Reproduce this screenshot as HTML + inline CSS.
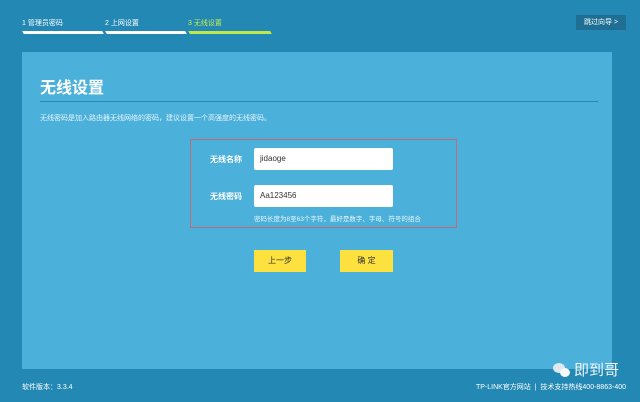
<html><head><style>
body{margin:0;width:640px;height:402px;background:#2388b3;font-family:"Liberation Sans","Noto Sans CJK SC",sans-serif;position:relative;overflow:hidden;color:#fff}
.a{position:absolute}
.st{font-size:7px;top:18px;color:#fff}
.bar{top:31px;height:3px;background:#fff;transform:skewX(30deg)}
input{font-family:inherit}
</style></head><body>
<div class="a st" style="left:22px">1 管理员密码</div>
<div class="a st" style="left:105px">2 上网设置</div>
<div class="a st" style="left:188px;color:#c4ec52">3 无线设置</div>
<div class="a bar" style="left:23px;width:80px"></div>
<div class="a bar" style="left:106px;width:80px"></div>
<div class="a bar" style="left:189px;width:82px;background:#bfe64a"></div>
<div class="a" style="left:576px;top:15px;width:50px;height:15px;background:#1e6f93;font-size:7px;line-height:15px;text-align:center">跳过向导 &gt;</div>
<div class="a" style="left:22px;top:52px;width:590px;height:317px;background:#4bb0da"></div>
<div class="a" style="left:40px;top:74px;font-size:16px;font-weight:bold">无线设置</div>
<div class="a" style="left:40px;top:101px;width:558px;height:1px;background:#2d88b0"></div>
<div class="a" style="left:40px;top:113px;font-size:7px;color:#e8f4fa">无线密码是加入路由器无线网络的密码，建议设置一个高强度的无线密码。</div>
<div class="a" style="left:190px;top:139px;width:265px;height:87px;border:1px solid #c06a7a"></div>
<div class="a" style="left:210px;top:154px;font-size:8px;font-weight:bold">无线名称</div>
<div class="a" style="left:210px;top:191px;font-size:8px;font-weight:bold">无线密码</div>
<div class="a" style="left:254px;top:148px;width:139px;height:22px;background:#fff;border-radius:2px;color:#333;font-size:8px;line-height:22px;text-indent:6px">jidaoge</div>
<div class="a" style="left:254px;top:185px;width:139px;height:22px;background:#fff;border-radius:2px;color:#333;font-size:8px;line-height:22px;text-indent:6px">Aa123456</div>
<div class="a" style="left:254px;top:213px;font-size:6.5px;color:#eaf6fb">密码长度为8至63个字符，最好是数字、字母、符号的组合</div>
<div class="a" style="left:254px;top:250px;width:52px;height:22px;background:#fde13e;color:#333;font-size:8px;line-height:22px;text-align:center">上一步</div>
<div class="a" style="left:340px;top:250px;width:53px;height:22px;background:#fde13e;color:#333;font-size:8px;line-height:22px;text-align:center">确 定</div>
<div class="a" style="left:22px;top:382px;font-size:7px">软件版本：3.3.4</div>
<div class="a" style="right:14px;top:382px;font-size:7px">TP-LINK官方网站 &nbsp;|&nbsp; 技术支持热线400-8863-400</div>
<div class="a" style="left:553px;top:363px;width:12px;height:10px;background:#dfe8ec;border-radius:50%"></div>
<div class="a" style="left:560px;top:368px;width:10px;height:9px;background:#f4f8fa;border-radius:50%"></div>
<div class="a" style="left:574px;top:359px;font-size:15px;color:#f2f6f8">即到哥</div>
</body></html>
